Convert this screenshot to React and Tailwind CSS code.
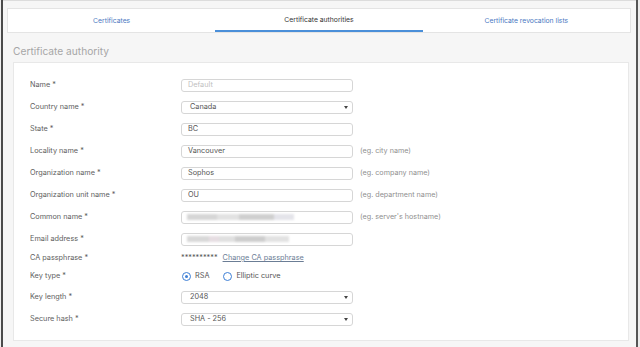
import React from 'react';

const font = { fontFamily: 'Inter, "Noto Sans", sans-serif' };

function Field({ label, children, hint, h = 'h-[22px]' }) {
  return (
    <div className={`flex items-center ${h}`}>
      <div className="w-[151px] shrink-0 text-[7.3px] text-[#5e5e5e]">{label}</div>
      {children}
      {hint && <div className="ml-[7px] text-[7.2px] text-[#8f8f8f]">{hint}</div>}
    </div>
  );
}

function Input({ value, placeholder }) {
  return (
    <div className="flex h-[13px] w-[172px] items-center rounded-[3px] border border-[#d6d6d6] bg-white px-[6px] text-[7.3px] text-[#555]">
      {value ?? <span className="text-[#c0c0c0]">{placeholder}</span>}
    </div>
  );
}

function Blurred({ widths }) {
  return (
    <div className="flex h-[13px] w-[172px] items-center overflow-hidden rounded-[3px] border border-[#d6d6d6] bg-white px-[5px]">
      <div className="flex h-[6px] items-center blur-[1.2px]">
        {widths.map(([w, c], i) => (
          <div key={i} className={`h-[6px] ${w} ${c}`} />
        ))}
      </div>
    </div>
  );
}

function Select({ value }) {
  return (
    <div className="flex h-[13px] w-[172px] items-center justify-between rounded-[3px] border border-[#d6d6d6] bg-white pl-[8px] pr-[4px] text-[7.3px] text-[#555]">
      <span>{value}</span>
      <span className="h-0 w-0 border-x-[2.5px] border-t-[3.5px] border-x-transparent border-t-[#444]" />
    </div>
  );
}

function Radio({ checked, label }) {
  return (
    <div className="flex items-center gap-[4px]">
      <span className="flex h-[9px] w-[9px] items-center justify-center rounded-full border-[1.5px] border-[#3d7fd6] bg-white">
        {checked && <span className="h-[3px] w-[3px] rounded-full bg-[#3d7fd6]" />}
      </span>
      <span className="text-[7.3px] text-[#555]">{label}</span>
    </div>
  );
}

export default function App() {
  return (
    <div className="flex h-[347px] w-[640px] bg-[#f6f6f6]" style={font}>
      <div className="w-px bg-[#f0f0f0]" />
      <div className="w-[2px] bg-[#4b4b4b]" />
      <div className="flex flex-1 flex-col border-t border-[#dcdcdc] pl-[4px] pr-[5px] pt-[7px]">
        <div className="grid h-[25px] grid-cols-3 border border-[#e4e4e4] bg-white text-[6.8px]">
          <div className="flex items-center justify-center pt-[1px] text-[#4a78c2]">Certificates</div>
          <div className="flex items-center justify-center border-b-2 border-[#4a8fd9] pt-[2px] text-[#333]">
            Certificate authorities
          </div>
          <div className="flex items-center justify-center pt-[1px] text-[#4a78c2]">Certificate revocation lists</div>
        </div>
        <div className="ml-[6px] mt-[11px] text-[10.2px] leading-[15px] text-[#a6a6a6]">Certificate authority</div>
        <div className="ml-[6px] mr-[2px] mt-[3px] h-[279px] border border-[#e8e8e8] bg-white pl-[16px] pt-[11px]">
          <Field label="Name *">
            <Input placeholder="Default" />
          </Field>
          <Field label="Country name *">
            <Select value="Canada" />
          </Field>
          <Field label="State *">
            <Input value="BC" />
          </Field>
          <Field label="Locality name *" hint="(eg. city name)">
            <Input value="Vancouver" />
          </Field>
          <Field label="Organization name *" hint="(eg. company name)">
            <Input value="Sophos" />
          </Field>
          <Field label="Organization unit name *" hint="(eg. department name)">
            <Input value="OU" />
          </Field>
          <Field label="Common name *" hint="(eg. server's hostname)">
            <Blurred
              widths={[
                ['w-[30px]', 'bg-[#d6d6d6]'],
                ['w-[22px]', 'bg-[#e2e2e2]'],
                ['w-[35px]', 'bg-[#cfcfcf]'],
                ['w-[20px]', 'bg-[#e4e4ea]'],
              ]}
            />
          </Field>
          <Field label="Email address *">
            <Blurred
              widths={[
                ['w-[22px]', 'bg-[#d8d8d8]'],
                ['w-[10px]', 'bg-[#e6dde2]'],
                ['w-[16px]', 'bg-[#e0e0e0]'],
                ['w-[30px]', 'bg-[#cdcdcd]'],
                ['w-[24px]', 'bg-[#e2e2e2]'],
              ]}
            />
          </Field>
          <Field label="CA passphrase *" h="h-[17px]">
            <span className="text-[7.3px] text-[#555]">**********</span>
            <span className="ml-[5px] text-[7.3px] text-[#6b7d95] underline">Change CA passphrase</span>
          </Field>
          <Field label="Key type *" h="h-[18px]">
            <div className="flex items-center gap-[14px] pl-[1px]">
              <Radio checked label="RSA" />
              <Radio label="Elliptic curve" />
            </div>
          </Field>
          <div className="h-px" />
          <Field label="Key length *">
            <Select value="2048" />
          </Field>
          <Field label="Secure hash *">
            <Select value="SHA - 256" />
          </Field>
        </div>
      </div>
      <div className="w-[2px] bg-[#555]" />
      <div className="w-[2px] bg-[#ececec]" />
    </div>
  );
}
